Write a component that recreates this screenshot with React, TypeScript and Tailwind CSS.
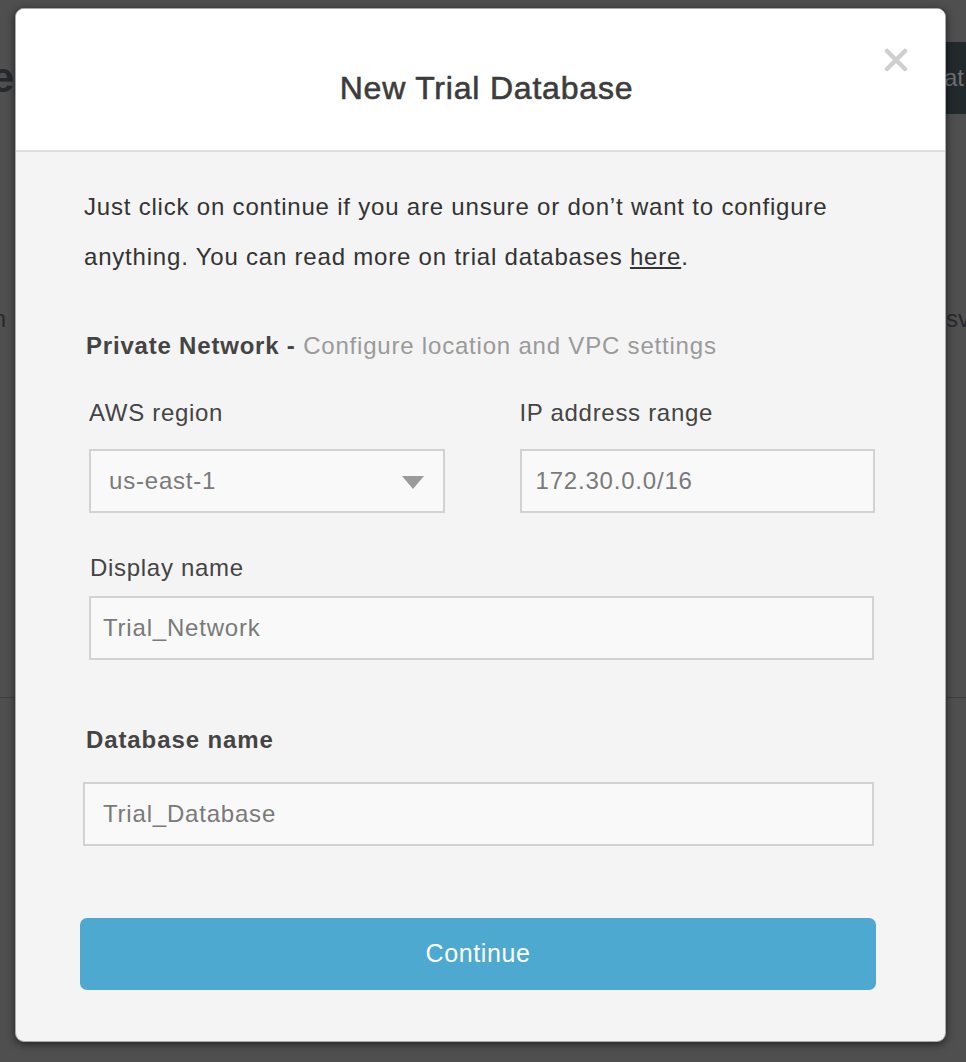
import React from 'react';

const font = { fontFamily: '"Liberation Sans", Arial, sans-serif' };

function CloseIcon() {
  return (
    <svg width="24" height="24" viewBox="0 0 24 24">
      <path d="M3 3 L21 21 M21 3 L3 21" stroke="#cfcfcf" strokeWidth="4.5" strokeLinecap="round" />
    </svg>
  );
}

function Field({ value, className = '' }: { value: string; className?: string }) {
  return (
    <div
      className={`h-[64px] flex items-center border-2 border-[#d2d2d2] bg-[#f9f9f9] text-[24px] tracking-[0.8px] text-[#7a7a7a] ${className}`}
    >
      {value}
    </div>
  );
}

function Background() {
  return (
    <div className="h-[1062px] bg-[#4f4f4f] overflow-hidden flex flex-col">
      <div className="mt-[42px] h-[72px] flex justify-between items-center">
        <div className="w-[14px] overflow-hidden flex justify-end">
          <span className="text-[42px] font-bold text-[#262a2f] leading-none">Create</span>
        </div>
        <div className="w-[22px] h-[72px] bg-[#21292d] overflow-hidden flex items-center">
          <span className="text-[24px] text-[#6d6f70] whitespace-nowrap">at</span>
        </div>
      </div>
      <div className="mt-[190px] flex justify-between items-center h-[30px]">
        <div className="w-[6px] overflow-hidden flex justify-end">
          <span className="text-[24px] text-[#262a2f]">n</span>
        </div>
        <span className="text-[24px] text-[#262a2f] -mr-[4px]">sv</span>
      </div>
      <div className="mt-[363px] h-px bg-[#3e3e3e]" />
    </div>
  );
}

export default function App() {
  return (
    <div className="relative w-[966px] h-[1062px] overflow-hidden" style={font}>
      <Background />

      <div className="absolute left-[15px] top-[8px] w-[931px] h-[1034px] rounded-[9px] bg-[#f4f4f4] border border-[#a9a9a9] shadow-[0_2px_8px_rgba(0,0,0,0.6)] overflow-hidden flex flex-col">
        <div className="relative h-[143px] shrink-0 bg-white border-b-2 border-[#dedede] flex items-center justify-center pt-[16px] pl-[12px]">
          <h1 className="text-[32px] tracking-[0.8px] text-[#3c3c3c] [-webkit-text-stroke:0.6px_#3c3c3c]">
            New Trial Database
          </h1>
          <button className="absolute right-[37px] top-[39px]">
            <CloseIcon />
          </button>
        </div>

        <div className="pl-[64px] pr-[69px] pt-[30px] flex flex-col">
          <p className="ml-[4px] mr-[30px] text-[24px] tracking-[0.8px] leading-[50px] text-[#333]">
            Just click on continue if you are unsure or don’t want to configure anything. You can read more on trial databases{' '}
            <span className="underline">here</span>.
          </p>

          <div className="ml-[6px] mt-[49px] text-[24px] tracking-[0.8px] leading-[30px]">
            <span className="font-bold text-[#444]">Private Network - </span>
            <span className="text-[#9a9a9a]">Configure location and VPC settings</span>
          </div>

          <div className="ml-[9px] mr-[1px] mt-[37px] grid grid-cols-2 gap-[75px]">
            <div className="flex flex-col gap-[21px]">
              <label className="text-[24px] tracking-[0.7px] leading-[30px] text-[#444]">AWS region</label>
              <div className="relative">
                <Field value="us-east-1" className="pl-[18px]" />
                <svg className="absolute right-[21px] top-[27px]" width="22" height="13" viewBox="0 0 22 13">
                  <path d="M0 0 H22 L11 13 Z" fill="#9b9b9b" />
                </svg>
              </div>
            </div>
            <div className="flex flex-col gap-[21px]">
              <label className="text-[24px] tracking-[0.7px] leading-[30px] text-[#444]">IP address range</label>
              <Field value="172.30.0.0/16" className="pl-[14px]" />
            </div>
          </div>

          <div className="ml-[9px] mr-[2px] mt-[40px] flex flex-col gap-[13px]">
            <label className="ml-[1px] text-[24px] tracking-[0.7px] leading-[30px] text-[#444]">Display name</label>
            <Field value="Trial_Network" className="pl-[12px]" />
          </div>

          <div className="ml-[3px] mr-[2px] mt-[65px] flex flex-col gap-[27px]">
            <label className="ml-[3px] text-[24px] tracking-[0.9px] leading-[30px] font-bold text-[#444]">Database name</label>
            <Field value="Trial_Database" className="pl-[18px]" />
          </div>

          <button className="mt-[72px] h-[72px] rounded-[7px] bg-[#4da9d0] text-white text-[25px] tracking-[0.6px]">
            Continue
          </button>
        </div>
      </div>
    </div>
  );
}
